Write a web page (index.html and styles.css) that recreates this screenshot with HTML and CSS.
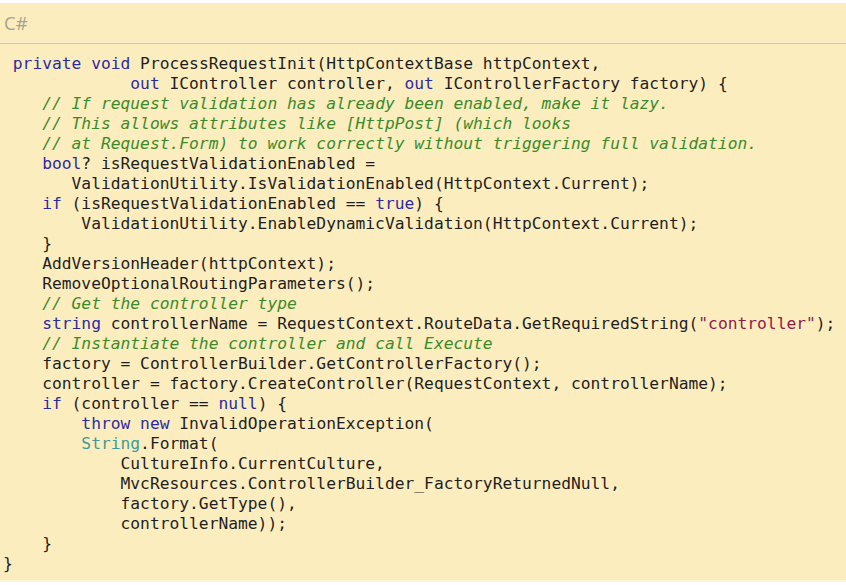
FILE: index.html
```html
<!DOCTYPE html>
<html>
<head>
<meta charset="utf-8">
<link rel="stylesheet" href="styles.css">
</head>
<body>
<div class="snippet">
  <div class="lang">C#</div>
<pre class="code"> <span class="kw">private</span> <span class="kw">void</span> ProcessRequestInit(HttpContextBase httpContext,
             <span class="kw">out</span> IController controller, <span class="kw">out</span> IControllerFactory factory) {
    <span class="cm">// If request validation has already been enabled, make it lazy.</span>
    <span class="cm">// This allows attributes like [HttpPost] (which looks</span>
    <span class="cm">// at Request.Form) to work correctly without triggering full validation.</span>
    <span class="kw">bool</span>? isRequestValidationEnabled =
       ValidationUtility.IsValidationEnabled(HttpContext.Current);
    <span class="kw">if</span> (isRequestValidationEnabled == <span class="kw">true</span>) {
        ValidationUtility.EnableDynamicValidation(HttpContext.Current);
    }
    AddVersionHeader(httpContext);
    RemoveOptionalRoutingParameters();
    <span class="cm">// Get the controller type</span>
    <span class="kw">string</span> controllerName = RequestContext.RouteData.GetRequiredString(<span class="str">"controller"</span>);
    <span class="cm">// Instantiate the controller and call Execute</span>
    factory = ControllerBuilder.GetControllerFactory();
    controller = factory.CreateController(RequestContext, controllerName);
    <span class="kw">if</span> (controller == <span class="kw">null</span>) {
        <span class="kw">throw</span> <span class="kw">new</span> InvalidOperationException(
        <span class="ty">String</span>.Format(
            CultureInfo.CurrentCulture,
            MvcResources.ControllerBuilder_FactoryReturnedNull,
            factory.GetType(),
            controllerName));
    }
}</pre>
</div>
</body>
</html>
```

FILE: styles.css
```css
html, body {
  margin: 0;
  padding: 0;
  background: #ffffff;
}

.snippet {
  margin-top: 3px;
  background: #fcedbf;
  width: 846px;
  height: 577px;
  border-bottom: 2px solid #fdf3d8;
}

.lang {
  height: 40px;
  box-sizing: border-box;
  padding: 8px 0 0 4px;
  font-family: "Open Sans", "Liberation Sans", sans-serif;
  font-size: 18.5px;
  line-height: 24px;
  color: #a8a290;
  border-bottom: 1px solid #fdf1d0;
}

.code {
  margin: 0;
  border-top: 1px solid #f0c664;
  padding: 10px 0 0 3px;
  font-family: "DejaVu Sans Mono", "Liberation Mono", monospace;
  font-size: 16.27px;
  line-height: 20px;
  color: #1e1e1e;
}

.kw { color: #2b2ba0; }
.cm { color: #3b8a2a; font-style: italic; }
.ty { color: #3c9a9a; }
.str { color: #8e1a4c; }
```
